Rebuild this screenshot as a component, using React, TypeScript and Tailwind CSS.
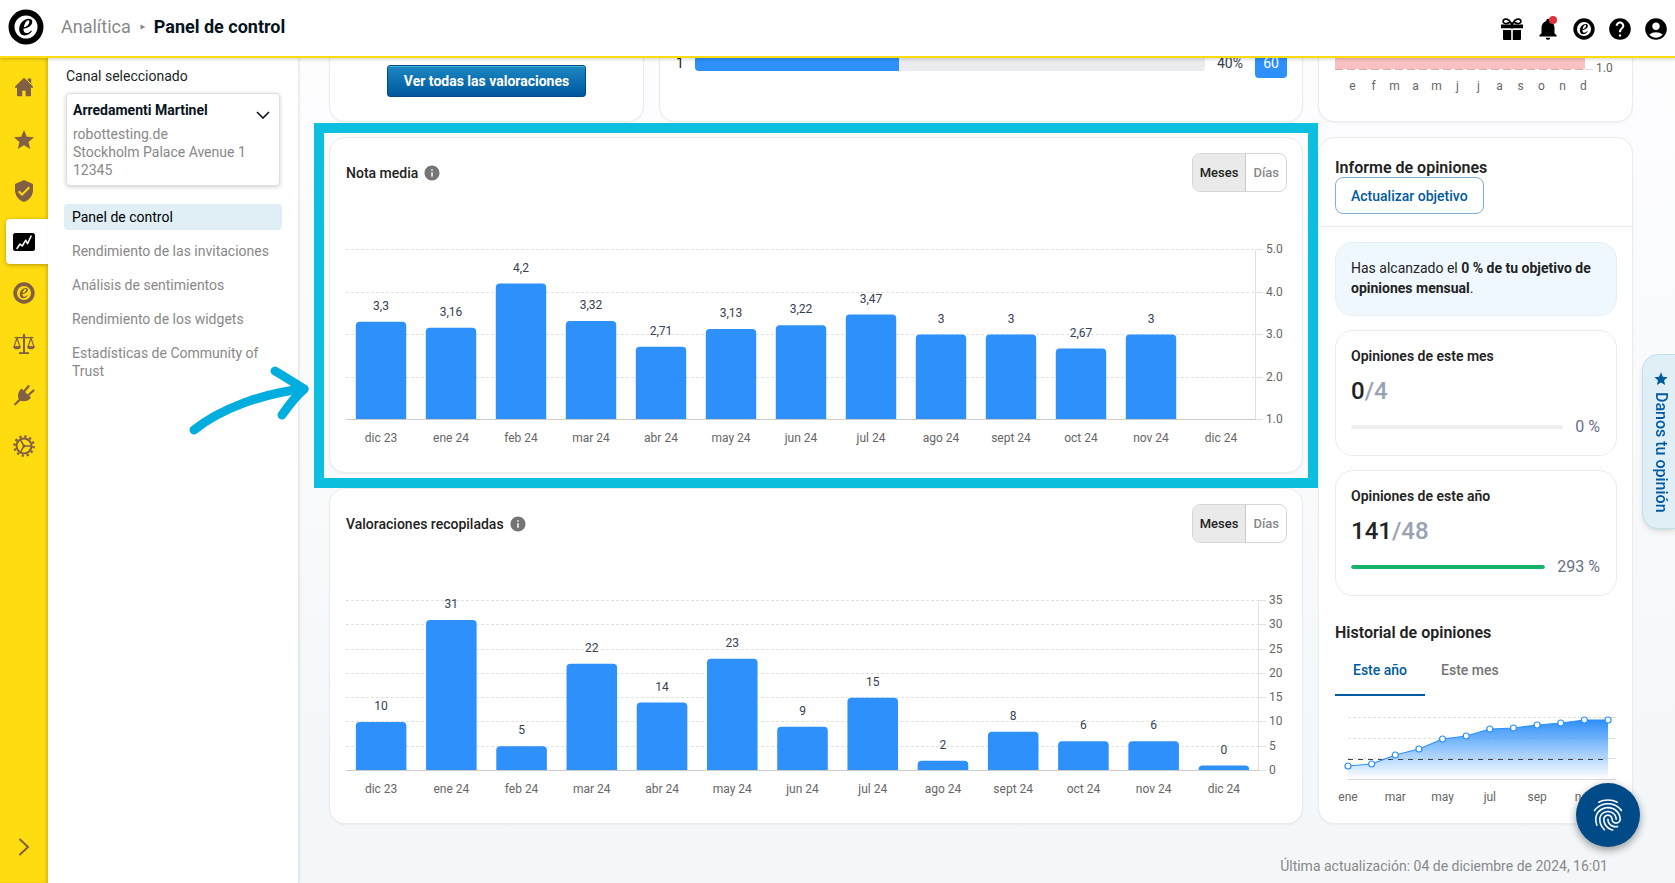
import React, { useState } from 'react';
import clsx from 'clsx';
import {
  MdAccountCircle,
  MdFingerprint,
  MdHelp,
  MdInfo,
  MdNotifications,
  MdStar,
  MdVerifiedUser,
} from 'react-icons/md';

interface Point {
  label: string;
  value: number | null;
  text?: string;
}

const ratings: Point[] = [
  { label: 'dic 23', value: 3.3, text: '3,3' },
  { label: 'ene 24', value: 3.16, text: '3,16' },
  { label: 'feb 24', value: 4.2, text: '4,2' },
  { label: 'mar 24', value: 3.32, text: '3,32' },
  { label: 'abr 24', value: 2.71, text: '2,71' },
  { label: 'may 24', value: 3.13, text: '3,13' },
  { label: 'jun 24', value: 3.22, text: '3,22' },
  { label: 'jul 24', value: 3.47, text: '3,47' },
  { label: 'ago 24', value: 3, text: '3' },
  { label: 'sept 24', value: 3, text: '3' },
  { label: 'oct 24', value: 2.67, text: '2,67' },
  { label: 'nov 24', value: 3, text: '3' },
  { label: 'dic 24', value: null },
];

const collected: Point[] = [10, 31, 5, 22, 14, 23, 9, 15, 2, 8, 6, 6, 0].map((value, i) => ({
  label: ratings[i].label,
  value,
  text: String(value),
}));

// y position of each cumulative monthly total in the history chart
const history = [70, 68, 59, 53, 43, 40, 33, 32, 29, 27, 24, 24];

function TrustedE({ className }: { className?: string }) {
  return (
    <svg viewBox="0 0 36 36" className={className} fill="currentColor" fillRule="evenodd" aria-hidden="true">
      <path d="M18 .5a17.5 17.5 0 1 1 0 35a17.5 17.5 0 0 1 0-35zM18 6.500a11.5 11.5 0 1 0 0 23a11.5 11.5 0 0 0 0-23z" />
      <path d="M15.500 19.800C19 19.500 24.300 17 24.300 12.800C24.300 10.600 22.600 9.800 20.600 9.800C15.500 9.800 11.200 15 11.200 20.300C11.200 24 13.300 26.400 16.600 26.400C19.800 26.400 22.400 24.600 24 22L23.200 21.400C21.600 23.300 20 24 18.500 24C16.300 24 15.300 22.400 15.500 19.800ZM15.800 18.400C16.300 15 18.300 11.200 20.100 11.200C20.900 11.200 21.300 11.700 21.300 12.800C21.300 15.500 18.600 18 15.800 18.400Z" />
    </svg>
  );
}

function HomeIcon() {
  return (
    <svg viewBox="0 0 20 20" className="mb-1 h-5 w-5" fill="currentColor" aria-hidden="true">
      <path d="M10 .8L1 9.500v1.200h2V19.200h5.200v-5.500h3.400v5.500H17v-8.500h2V9.500l-1.800-1.800V1.500h-3.500v2.700z" />
      <path d="M13.500 3.500l3.700 3.700" stroke="#ffdc0f" strokeWidth="1" />
    </svg>
  );
}

function ChartIcon() {
  return (
    <svg viewBox="0 0 22 18" className="h-[18px] w-[22px]" aria-hidden="true">
      <rect width="22" height="18" rx="2.500" fill="#000" />
      <path
        d="M4 15.500l3-4.500 2.200 2 3.600-5.800 1.700 3.600 3.600-7.700"
        fill="none"
        stroke="#fff"
        strokeWidth="1.500"
        strokeLinecap="round"
        strokeLinejoin="round"
      />
    </svg>
  );
}

function ScaleIcon() {
  return (
    <svg viewBox="0 0 22 22" className="h-[22px] w-[22px]" fill="currentColor" aria-hidden="true">
      <path d="M10 1h2v18.500h-2zM6 19.200h10V21H6zM1.500 4h7.500l2-1.200L13 4h7.500v1.300H1.500z" />
      <path d="M.2 13.500h7.600c0 3.800-7.600 3.800-7.600 0zM14.200 13.500h7.600c0 3.800-7.600 3.800-7.600 0z" />
      <path d="M4 5L1 13.800h6zM18 5l-3 8.800h6z" fill="none" stroke="currentColor" strokeWidth="1.200" />
    </svg>
  );
}

function PlugIcon() {
  return (
    <svg viewBox="0 0 22 22" className="h-[22px] w-[22px]" aria-hidden="true">
      <path d="M8.500 4.500l9.500 9.300c-2.600 3.500-8 4.600-11.300 2.500c-2.900-3.200-1.900-8.600 1.800-11.800z" fill="currentColor" />
      <path
        d="M7.500 15L2.200 20.200M11.500 7L15.500 2.200M15.500 11L20.500 6.500"
        fill="none"
        stroke="currentColor"
        strokeWidth="2.200"
        strokeLinecap="round"
      />
    </svg>
  );
}

function GearIcon() {
  return (
    <svg viewBox="0 0 22 22" className="h-[22px] w-[22px]" fill="none" stroke="currentColor" aria-hidden="true">
      <circle cx="11" cy="11" r="7.500" strokeWidth="2" />
      <circle cx="11" cy="11" r="9.600" strokeWidth="2.400" strokeDasharray="2.300 2.726" />
      <path d="M11 11L7.300 4.600M11 11h7.500M11 11l-3.700 6.400" strokeWidth="1.500" />
      <circle cx="11" cy="11" r="1.500" fill="currentColor" stroke="none" />
    </svg>
  );
}

function GiftIcon() {
  return (
    <svg viewBox="0 0 22 22" className="h-[22px] w-[22px]" fill="currentColor" aria-hidden="true">
      <path d="M0 6.500h10.200v3.700H0zM11.800 6.500H22v3.700H11.800zM2 12h8.200v10H3a1 1 0 0 1-1-1zM11.800 12H20v9a1 1 0 0 1-1 1h-7.200z" />
      <path
        d="M10.500 6C9 3 6.500.8 4 1.200C1.500 1.700 1.500 4.500 3.500 5.300C5.500 5.900 8 4.800 9 4M11.500 6C13 3 15.500.8 18 1.200c2.500.5 2.500 3.300.5 4.100C16.500 5.900 14 4.800 13 4"
        fill="none"
        stroke="currentColor"
        strokeWidth="1.700"
      />
      <path d="M10 4.500h2v6h-2z" />
    </svg>
  );
}

const railItems = [
  { name: 'Inicio', icon: <HomeIcon /> },
  { name: 'Opiniones', icon: <MdStar size={24} /> },
  { name: 'Garantía', icon: <MdVerifiedUser size={24} /> },
  { name: 'Analítica', icon: <ChartIcon />, active: true },
  { name: 'Trustbadge', icon: <TrustedE className="h-[22px] w-[22px]" /> },
  { name: 'Legal', icon: <ScaleIcon /> },
  { name: 'Integraciones', icon: <PlugIcon /> },
  { name: 'Ajustes', icon: <GearIcon /> },
];

const navItems = [
  'Panel de control',
  'Rendimiento de las invitaciones',
  'Análisis de sentimientos',
  'Rendimiento de los widgets',
  'Estadísticas de Community of Trust',
];

function Header() {
  return (
    <header className="relative z-20 flex h-[58px] items-center justify-between border-b-2 border-[#ffdc0f] bg-white px-2 shadow-[0_1px_4px_rgba(0,0,0,0.2)]">
      <div className="mb-[2px] flex items-center">
        <TrustedE className="h-9 w-9 text-black" />
        <nav className="ml-[17px] flex items-center text-lg leading-6">
          <a href="#analitica" className="text-[#888]">Analítica</a>
          <svg viewBox="0 0 6 6" className="ml-[9px] mr-2 h-[6px] w-[6px]" aria-hidden="true">
            <path d="M.5 .5L5.500 3L.5 5.500z" fill="#888" />
          </svg>
          <span className="font-bold text-[#07131d]">Panel de control</span>
        </nav>
      </div>
      <div className="mt-[2px] flex items-center gap-[14px] text-black">
        <button aria-label="Regalos"><GiftIcon /></button>
        <button aria-label="Notificaciones" className="relative">
          <MdNotifications size={26} className="-mx-[2px]" />
          <span className="absolute right-[2px] top-0 h-2 w-2 rounded-full bg-[#e0323c]" />
        </button>
        <button aria-label="Trusted"><TrustedE className="h-[22px] w-[22px]" /></button>
        <button aria-label="Ayuda"><MdHelp size={26} className="-mx-[2px]" /></button>
        <button aria-label="Cuenta"><MdAccountCircle size={26} className="-mx-[2px]" /></button>
      </div>
    </header>
  );
}

function Rail() {
  return (
    <nav className="relative flex w-12 shrink-0 flex-col justify-between bg-[#ffdc0f] pt-[5px] text-[#805f45] shadow-[inset_-3px_0_4px_-2px_rgba(0,0,0,0.2)]">
      <div>
        {railItems.map((item) => (
          <div key={item.name} className="flex h-[51px] items-center">
            <a
              href="#"
              aria-label={item.name}
              className={clsx(
                'flex h-[45px] w-12 items-center justify-center',
                item.active && 'ml-[6px] w-[42px] rounded-l bg-white pr-[6px] shadow-[0_1px_4px_rgba(0,0,0,0.3)]'
              )}
            >
              {item.icon}
            </a>
          </div>
        ))}
      </div>
      <button aria-label="Expandir" className="mb-[26px] flex justify-center">
        <svg viewBox="0 0 12 20" className="h-5 w-3" fill="none" stroke="currentColor" strokeWidth="2" aria-hidden="true">
          <path d="M1.500 2l8.500 8l-8.500 8" />
        </svg>
      </button>
    </nav>
  );
}

function SidePanel() {
  return (
    <aside className="relative z-10 w-[250px] shrink-0 bg-white px-4 pt-2 text-sm shadow-[1px_0_3px_rgba(0,0,0,0.12)]">
      <p className="ml-[2px] leading-5 text-[#1a1f26]">Canal seleccionado</p>
      <button className="mx-[2px] mt-[7px] flex w-[214px] justify-between rounded border border-[#e0e0e0] bg-white px-[6px] pb-[6px] pt-[7px] text-left leading-[18px] shadow-[0_1px_4px_rgba(0,0,0,0.2)]">
        <span>
          <span className="block font-bold text-[#07131d]">Arredamenti Martinel</span>
          <span className="mt-[6px] block text-[#888]">
            robottesting.de
            <br />
            Stockholm Palace Avenue 1
            <br />
            12345
          </span>
        </span>
        <svg viewBox="0 0 14 8" className="mr-[3px] mt-[10px] h-2 w-[14px]" fill="none" stroke="#07131d" strokeWidth="1.600" aria-hidden="true">
          <path d="M1 1l6 6l6-6" />
        </svg>
      </button>
      <nav className="mt-[18px] flex flex-col gap-2 leading-[18px]">
        {navItems.map((item, i) => (
          <a
            key={item}
            href="#"
            className={clsx('rounded px-2 py-1', i === 0 ? 'bg-[#e0eff6] text-black' : 'text-[#888]')}
          >
            {item}
          </a>
        ))}
      </nav>
      {/* hand-drawn pointer towards the highlighted card */}
      <svg
        viewBox="0 0 124 72"
        className="pointer-events-none absolute left-[140px] top-[306px] h-[72px] w-[124px]"
        fill="none"
        stroke="#00addf"
        strokeWidth="9"
        strokeLinecap="round"
        strokeLinejoin="round"
        aria-hidden="true"
      >
        <path d="M6 66C32 45 75 29 116 25" />
        <path d="M87 7c10 6 20 12 29 18c-8 7-15 16-22 26" />
      </svg>
    </aside>
  );
}

interface BarChartProps {
  data: Point[];
  min: number;
  max: number;
  ticks: string[];
  plotWidth: number;
}

function BarChart({ data, min, max, ticks, plotWidth }: BarChartProps) {
  const top = 57.5;
  const bottom = 227.5;
  const step = plotWidth / data.length;
  const barWidth = step * 0.72;

  return (
    <svg viewBox="0 0 941 264" className="block w-full text-xs" role="img">
      {ticks.map((tick, i) => {
        const y = Math.floor(top + ((bottom - top) * i) / (ticks.length - 1)) + 0.5;
        return (
          <g key={tick}>
            <line x1="0" x2={plotWidth} y1={y} y2={y} stroke="#e2e2e2" strokeDasharray="3 2" />
            <line x1={plotWidth} x2={plotWidth + 7} y1={y} y2={y} stroke="#e0e0e0" />
            <text x={plotWidth + 10} y={y + 3} fill="#666">{tick}</text>
          </g>
        );
      })}
      <line x1={plotWidth - 0.5} x2={plotWidth - 0.5} y1={top} y2={bottom} stroke="#e0e0e0" />
      {data.map((d, i) => {
        const x = step * i + step / 2;
        const left = x - barWidth / 2;
        const right = x + barWidth / 2;
        const height = d.value === null ? 0 : Math.max(5, ((d.value - min) / (max - min)) * (bottom - top));
        const y = bottom - height;
        return (
          <g key={d.label}>
            {d.value !== null && (
              <>
                <path
                  d={`M${left} ${bottom}V${y + 4}Q${left} ${y} ${left + 4} ${y}H${right - 4}Q${right} ${y} ${right} ${y + 4}V${bottom}z`}
                  fill="#2e90fa"
                />
                <text x={x} y={y - 12} textAnchor="middle" fill="#344054">{d.text}</text>
              </>
            )}
            <text x={x} y={bottom + 22} textAnchor="middle" fill="#666">{d.label}</text>
          </g>
        );
      })}
      <line x1="0" x2={plotWidth} y1={bottom} y2={bottom} stroke="#ccc" />
    </svg>
  );
}

function ChartCard({ title, children }: { title: string; children: React.ReactNode }) {
  const [range, setRange] = useState('Meses');

  return (
    <section className="rounded-2xl border border-[#eaecf0] bg-white pb-4 pl-4 pr-[15px] pt-[15px] shadow-xs">
      <div className="flex h-[39px] items-center justify-between">
        <h2 className="flex items-center gap-[5px] text-sm font-medium text-[#222]">
          {title}
          <MdInfo size={18} className="text-[#757575]" />
        </h2>
        <div className="flex h-full overflow-hidden rounded-lg border border-[#d6d6d6] text-[13px] font-medium">
          {['Meses', 'Días'].map((option) => (
            <button
              key={option}
              onClick={() => setRange(option)}
              className={clsx('px-[7px]', range === option ? 'border-r border-[#ccc] bg-[#eaeaea] text-[#222]' : 'text-[#888]')}
            >
              {option}
            </button>
          ))}
        </div>
      </div>
      {children}
    </section>
  );
}

function GoalCard({ title, done, goal, percent }: { title: string; done: number; goal: number; percent: number }) {
  return (
    <div className="rounded-[18px] border border-[#eaecf0] pb-[18px] pl-[15px] pr-4 pt-[15px]">
      <h3 className="text-sm font-semibold leading-5 text-[#222]">{title}</h3>
      <p className="mt-[10px] text-2xl font-medium leading-[30px] text-[#222]">
        {done}
        <span className="text-[#98a2b3]">/{goal}</span>
      </p>
      <div className="mt-[11px] flex items-center gap-3 leading-5 text-[#667085]">
        <div className="h-1 flex-1 overflow-hidden rounded-full bg-[#eee]">
          <div className="h-full rounded-full bg-[#17b26a]" style={{ width: `${Math.min(percent, 100)}%` }} />
        </div>
        {percent} %
      </div>
    </div>
  );
}

function HistoryChart() {
  const points = history.map((y, i) => ({ x: 13 + i * 23.64, y }));
  const line = points.map((p) => `${p.x} ${p.y}`).join('L');

  return (
    <svg viewBox="0 0 282 112" className="block w-full text-xs" role="img">
      <defs>
        <linearGradient id="history-fill" x1="0" y1="0" x2="0" y2="1">
          <stop offset="0" stopColor="#2e90fa" />
          <stop offset="1" stopColor="#2e90fa" stopOpacity="0" />
        </linearGradient>
      </defs>
      {[21.5, 42.5, 62.5].map((y) => (
        <g key={y}>
          <line x1="13" x2="273" y1={y} y2={y} stroke="#e2e2e2" strokeDasharray="3 2" />
          <line x1="273" x2="281" y1={y} y2={y} stroke="#e0e0e0" />
        </g>
      ))}
      <line x1="13" x2="281" y1="83.500" y2="83.500" stroke="#d8d8d8" />
      <path d={`M${line}V83H13z`} fill="url(#history-fill)" />
      <line x1="13" x2="273" y1="63.500" y2="63.500" stroke="#444" strokeDasharray="5 5" />
      <path d={`M${line}`} fill="none" stroke="#2e90fa" strokeWidth="1.200" />
      {points.map((p) => (
        <circle key={p.x} cx={p.x} cy={p.y} r="3" fill="#fff" stroke="#2e90fa" strokeWidth="1.200" />
      ))}
      {['ene', 'mar', 'may', 'jul', 'sep', 'nov'].map((m, i) => (
        <text key={m} x={13 + i * 47.28} y="105" textAnchor="middle" fill="#666">{m}</text>
      ))}
    </svg>
  );
}

function TopCards() {
  return (
    <div className="flex gap-[15px]">
      <section className="flex w-[315px] justify-center rounded-2xl border border-[#eaecf0] bg-white pb-6 pt-[22px] shadow-xs">
        <button className="h-8 rounded-[3px] border border-[#00498a] bg-linear-to-b from-[#1c88c4] to-[#00589c] px-4 text-sm font-bold text-white shadow-[inset_0_1px_0_#3fb5da]">
          Ver todas las valoraciones
        </button>
      </section>
      <section className="flex-1 rounded-2xl border border-[#eaecf0] bg-white pl-4 pr-[15px] pt-[5px] text-sm text-[#344054] shadow-xs">
        <div className="flex h-[30px] items-center gap-3">
          <span className="w-[7px] text-[#222]">1</span>
          <div className="h-4 flex-1 overflow-hidden rounded bg-[#eaecf0]">
            <div className="h-full bg-[#2e90fa]" style={{ width: '40%' }} />
          </div>
          <span>40%</span>
          <span className="flex h-full w-8 items-center justify-center rounded bg-[#2e90fa] text-white">60</span>
        </div>
      </section>
    </div>
  );
}

function YearTrend() {
  return (
    <section className="h-20 rounded-2xl border border-[#eaecf0] bg-white pl-4 pr-[15px] shadow-xs">
      <svg viewBox="0 0 282 62" className="block w-full text-xs" role="img">
        <rect x="0" y="0" width="250" height="26" fill="#f9c1c2" />
        <line x1="0" x2="250" y1="26.500" y2="26.500" stroke="#dfa9aa" strokeDasharray="8 4" />
        <line x1="250" x2="258" y1="26.500" y2="26.500" stroke="#ddd" />
        <text x="261" y="29" fill="#666">1.0</text>
        {'efmamjjasond'.split('').map((m, i) => (
          <text key={i} x={17.5 + i * 21} y="47" textAnchor="middle" fill="#666">{m}</text>
        ))}
      </svg>
    </section>
  );
}

function ReportCard() {
  const [tab, setTab] = useState('Este año');

  return (
    <section className="rounded-2xl border border-[#eaecf0] bg-white text-[#222] shadow-xs">
      <div className="border-b border-[#eaecf0] px-4 pb-3 pt-5">
        <h2 className="text-base font-semibold leading-[19px]">Informe de opiniones</h2>
        <button className="h-[37px] rounded-lg border border-[#7fb0d8] px-[15px] text-sm font-medium text-[#005a9f]">
          Actualizar objetivo
        </button>
      </div>
      <div className="pb-[15px] pl-4 pr-[15px] pt-[15px]">
        <div className="flex flex-col gap-[14px]">
          <p className="rounded-[18px] border border-[#e6edf3] bg-[#f0f8ff] px-[15px] pb-[17px] pt-[15px] text-sm leading-5">
            Has alcanzado el <b>0 % de tu objetivo de</b> <b>opiniones mensual</b>.
          </p>
          <GoalCard title="Opiniones de este mes" done={0} goal={4} percent={0} />
          <GoalCard title="Opiniones de este año" done={141} goal={48} percent={293} />
        </div>
        <h2 className="mt-[27px] text-base font-semibold leading-5">Historial de opiniones</h2>
        <div className="mt-[3px] flex">
          {['Este año', 'Este mes'].map((name) => (
            <button
              key={name}
              onClick={() => setTab(name)}
              className={clsx(
                'h-[50px] border-b-2 px-4 text-sm font-medium',
                tab === name ? 'border-[#005a9f] px-[18px] text-[#005a9f]' : 'border-transparent text-[#757575]'
              )}
            >
              {name}
            </button>
          ))}
        </div>
        <HistoryChart />
      </div>
    </section>
  );
}

export default function App() {
  return (
    <div className="flex min-h-screen flex-col overflow-x-hidden bg-white font-['Roboto',sans-serif]">
      <Header />
      <div className="flex flex-1">
        <Rail />
        <SidePanel />
        <main className="min-w-0 flex-1 bg-linear-to-b from-[#fdfdfe] to-[#f3f7f9] pb-[7px] pl-[31px] pr-[42px]">
          <div className="-mt-4 flex gap-[15px]">
            <div className="flex min-w-0 flex-1 flex-col gap-[15px]">
              <TopCards />
              <div className="relative">
                <ChartCard title="Nota media">
                  <BarChart data={ratings} min={1} max={5} ticks={['5.0', '4.0', '3.0', '2.0', '1.0']} plotWidth={910} />
                </ChartCard>
                <div className="pointer-events-none absolute -bottom-[15px] -left-[15px] -right-[15px] -top-[14px] z-10 border-[10px] border-[#0dbfde]" />
              </div>
              <ChartCard title="Valoraciones recopiladas">
                <BarChart
                  data={collected}
                  min={0}
                  max={35}
                  ticks={['35', '30', '25', '20', '15', '10', '5', '0']}
                  plotWidth={913}
                />
              </ChartCard>
            </div>
            <div className="flex w-[315px] shrink-0 flex-col gap-[15px]">
              <YearTrend />
              <ReportCard />
            </div>
          </div>
          <p className="mr-[25px] mt-8 text-right text-sm leading-5 text-[#888]">
            Última actualización: 04 de diciembre de 2024, 16:01
          </p>
        </main>
      </div>

      <button className="fixed -right-px top-[354px] z-30 flex w-[34px] flex-col items-center gap-[5px] rounded-l-2xl border border-[#c3dfea] bg-[#e0eff6] pb-[15px] pl-1 pt-4 font-medium leading-4 text-[#005a9f] shadow-md">
        <MdStar size={16} />
        <span className="[writing-mode:vertical-rl]">Danos tu opinión</span>
      </button>
      <button
        aria-label="Privacidad"
        className="fixed bottom-9 right-[35px] z-30 flex h-16 w-16 items-center justify-center rounded-full bg-[#004b87] text-white shadow-[0_3px_8px_rgba(0,0,0,0.4)]"
      >
        <MdFingerprint size={38} />
      </button>
    </div>
  );
}
